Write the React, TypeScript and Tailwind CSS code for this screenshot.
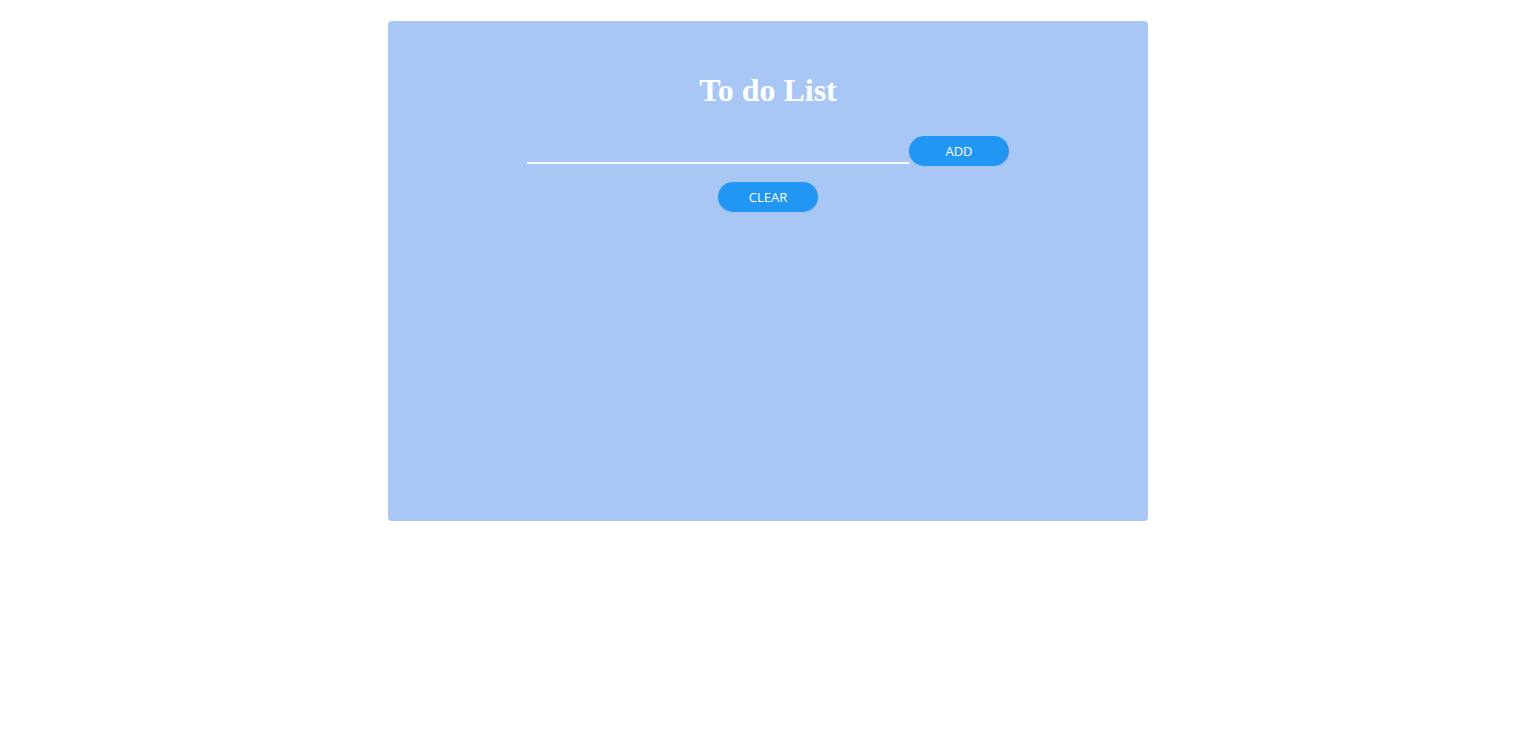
import React, { useState } from 'react';

const App = () => {
  const [text, setText] = useState('');
  const [items, setItems] = useState<string[]>([]);

  const handleAdd = () => {
    if (!text.trim()) return;
    setItems([...items, text]);
    setText('');
  };

  return (
    <div className="min-h-[750px] w-full bg-white pt-[21px]">
      <div className="mx-auto flex h-[500px] w-[760px] flex-col items-center rounded-[4px] bg-[#a8c7f5]">
        <h1 className="mt-[51px] text-[32px] leading-[37px] font-bold text-white [font-family:'Liberation_Serif',serif]">
          To do List
        </h1>

        <div className="mt-[27px] flex items-start">
          <input
            value={text}
            onChange={e => setText(e.target.value)}
            className="h-[28px] w-[382px] border-b-2 border-white bg-transparent text-white outline-none [font-family:'Open_Sans',sans-serif]"
          />
          <button
            onClick={handleAdd}
            className="h-[30px] w-[100px] rounded-full bg-[#2196f3] pt-[2px] text-[13px] text-white [font-family:'Open_Sans',sans-serif]"
          >
            ADD
          </button>
        </div>

        <button
          onClick={() => setItems([])}
          className="mt-[16px] h-[30px] w-[100px] rounded-full bg-[#2196f3] pt-[2px] text-[13px] text-white [font-family:'Open_Sans',sans-serif]"
        >
          CLEAR
        </button>

        <ul className="mt-4 text-white">
          {items.map((item, i) => (
            <li key={i}>{item}</li>
          ))}
        </ul>
      </div>
    </div>
  );
};

export default App;
